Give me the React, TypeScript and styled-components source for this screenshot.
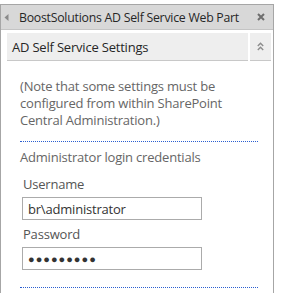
import React from 'react';
import styled, { createGlobalStyle } from 'styled-components';

const GlobalStyle = createGlobalStyle`
  body {
    margin: 0;
    background: #ffffff;
    font-family: 'Open Sans', 'Noto Sans', sans-serif;
  }
`;

const App = () => {
  return (
    <Page>
      <GlobalStyle />
      <Frame>
        <TitleBar>
          <CollapseArrow width="5" height="7" viewBox="0 0 5 7">
            <path d="M4.5 0 L0.5 3.5 L4.5 7 Z" fill="#8a8a8a" />
          </CollapseArrow>
          <TitleText>BoostSolutions AD Self Service Web Part</TitleText>
          <CloseIcon width="8" height="8" viewBox="0 0 8 8">
            <path d="M1 1 L7 7 M7 1 L1 7" stroke="#6e6e6e" strokeWidth="2" />
          </CloseIcon>
        </TitleBar>
        <Body>
          <SectionHeader>
            <HeaderTitle>AD Self Service Settings</HeaderTitle>
            <HeaderToggle>
              <svg width="7" height="9" viewBox="0 0 7 9">
                <path
                  d="M0.8 4 L3.5 1.3 L6.2 4 M0.8 8 L3.5 5.3 L6.2 8"
                  fill="none"
                  stroke="#8c8c8c"
                  strokeWidth="1.4"
                />
              </svg>
            </HeaderToggle>
          </SectionHeader>
          <Content>
            <Note>
              (Note that some settings must be configured from within SharePoint
              Central Administration.)
            </Note>
            <Divider />
            <GroupTitle>Administrator login credentials</GroupTitle>
            <Field>
              <Label>Username</Label>
              <TextBox>br\administrator</TextBox>
            </Field>
            <Field>
              <Label>Password</Label>
              <TextBox $secret>●●●●●●●●●</TextBox>
            </Field>
            <Divider $bottom />
          </Content>
        </Body>
      </Frame>
    </Page>
  );
};

export default App;

const Page = styled.div`
  padding-top: 4px;
  width: 281px;
  height: 293px;
  box-sizing: border-box;
  overflow: hidden;
`;

const Frame = styled.div`
  width: 274px;
  height: 289px;
  box-sizing: border-box;
  border: 1px solid #a6a6a6;
  border-bottom: none;
`;

const TitleBar = styled.div`
  display: flex;
  align-items: center;
  height: 24px;
  background: #d8d8d8;
  border-bottom: 1px solid #c4c4c4;
  padding: 0 8px 0 3px;
  color: #262626;
`;

const CollapseArrow = styled.svg`
  flex: none;
  margin-right: 10px;
`;

const TitleText = styled.span`
  flex: 1;
  font-size: 12.3px;
  letter-spacing: -0.25px;
  white-space: nowrap;
`;

const CloseIcon = styled.svg`
  flex: none;
`;

const Body = styled.div`
  padding: 3px 1px 0 6px;
`;

const SectionHeader = styled.div`
  display: flex;
  gap: 2px;
`;

const HeaderTitle = styled.div`
  width: 241px;
  height: 28px;
  box-sizing: border-box;
  background: #eeeeee;
  border-bottom: 1px solid #c8c8c8;
  padding-left: 5px;
  display: flex;
  align-items: center;
  font-size: 13px;
  color: #262626;
  letter-spacing: -0.2px;
`;

const HeaderToggle = styled.div`
  width: 21px;
  height: 28px;
  box-sizing: border-box;
  background: #eeeeee;
  border-bottom: 1px solid #c8c8c8;
  display: flex;
  align-items: center;
  justify-content: center;
`;

const Content = styled.div`
  padding: 0 14px 0 13px;
`;

const Note = styled.p`
  margin: 17px 0 0;
  font-size: 13px;
  line-height: 17px;
  color: #666666;
  letter-spacing: -0.2px;
`;

const Divider = styled.div<{ $bottom?: boolean }>`
  margin-top: ${(p) => (p.$bottom ? '17px' : '12px')};
  border-top: 1px dotted #2b5fd0;
`;

const GroupTitle = styled.div`
  margin-top: 7px;
  font-size: 13px;
  line-height: 17px;
  color: #666666;
  letter-spacing: -0.2px;
`;

const Field = styled.div`
  padding-left: 2px;
  margin-top: 10px;
  & + & {
    margin-top: 6px;
  }
`;

const Label = styled.div`
  padding-left: 1px;
  font-size: 13px;
  line-height: 17px;
  color: #555555;
  letter-spacing: -0.2px;
`;

const TextBox = styled.div<{ $secret?: boolean }>`
  margin-top: 4px;
  width: 180px;
  height: 23px;
  box-sizing: border-box;
  border: 1px solid #ababab;
  padding-left: 5px;
  display: flex;
  align-items: center;
  font-size: ${(p) => (p.$secret ? '11px' : '13px')};
  letter-spacing: ${(p) => (p.$secret ? '1px' : '-0.2px')};
  color: #333333;
`;
